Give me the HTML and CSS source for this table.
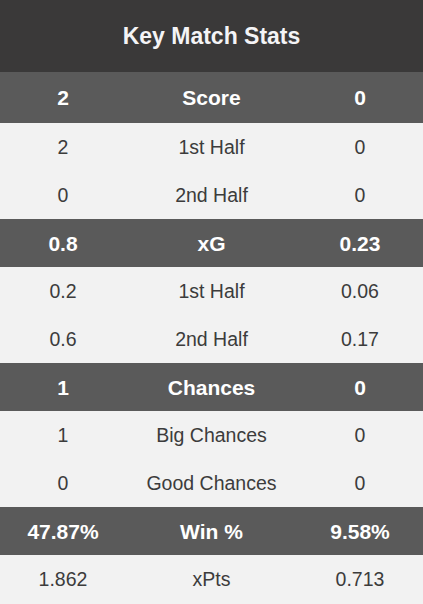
FILE: index.html
```html
<!DOCTYPE html>
<html>
<head>
<meta charset="utf-8">
<link rel="stylesheet" href="styles.css">
</head>
<body>
<div class="stats">
  <div class="title">Key Match Stats</div>
  <div class="row head score"><span>2</span><span>Score</span><span>0</span></div>
  <div class="row"><span>2</span><span>1st Half</span><span>0</span></div>
  <div class="row"><span>0</span><span>2nd Half</span><span>0</span></div>
  <div class="row head"><span>0.8</span><span>xG</span><span>0.23</span></div>
  <div class="row"><span>0.2</span><span>1st Half</span><span>0.06</span></div>
  <div class="row"><span>0.6</span><span>2nd Half</span><span>0.17</span></div>
  <div class="row head"><span>1</span><span>Chances</span><span>0</span></div>
  <div class="row"><span>1</span><span>Big Chances</span><span>0</span></div>
  <div class="row"><span>0</span><span>Good Chances</span><span>0</span></div>
  <div class="row head"><span>47.87%</span><span>Win %</span><span>9.58%</span></div>
  <div class="row"><span>1.862</span><span>xPts</span><span>0.713</span></div>
</div>
</body>
</html>
```

FILE: styles.css
```css
html, body {
  margin: 0;
  padding: 0;
  background: #f2f2f2;
  font-family: "Liberation Sans", Arial, sans-serif;
}
.stats {
  width: 423px;
  display: flex;
  flex-direction: column;
}
.title {
  height: 72px;
  display: flex;
  align-items: center;
  justify-content: center;
  background: #3a3939;
  color: #f4f4f6;
  font-weight: bold;
  font-size: 23px;
}
.row {
  display: grid;
  grid-template-columns: 126px 171px 126px;
  height: 48px;
  padding-top: 1px;
  box-sizing: border-box;
  align-items: center;
  text-align: center;
  font-size: 19.5px;
  color: #3c3c3c;
}
.row.head {
  background: #5a5a5a;
  color: #ffffff;
  font-weight: bold;
  font-size: 21px;
}
.row.score {
  height: 51px;
}
```
